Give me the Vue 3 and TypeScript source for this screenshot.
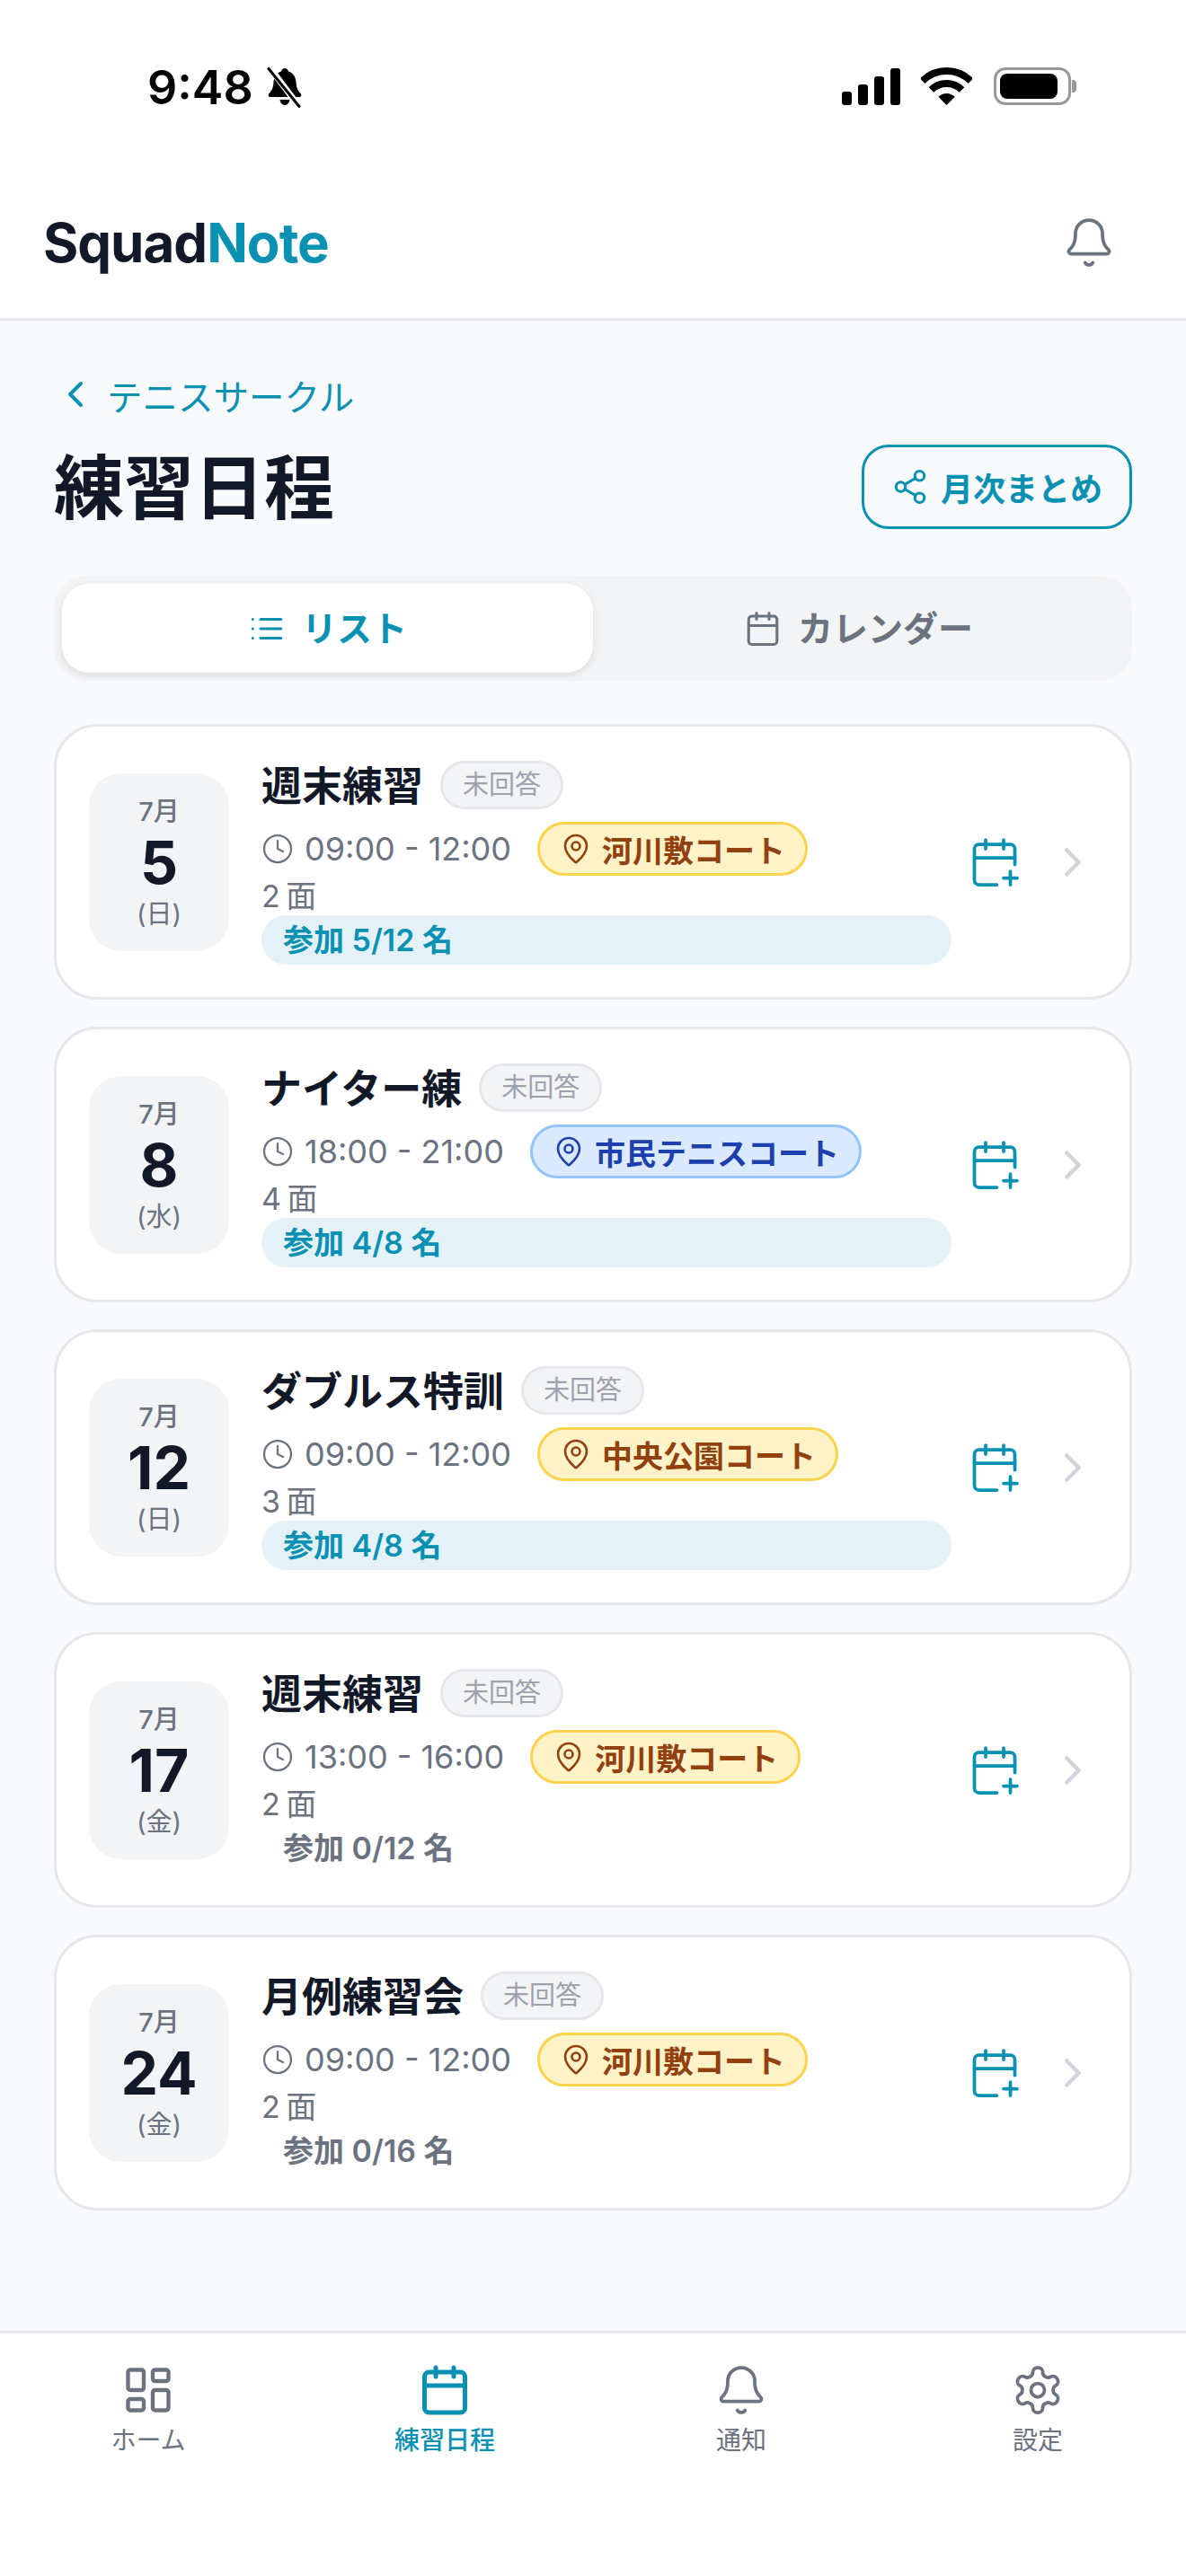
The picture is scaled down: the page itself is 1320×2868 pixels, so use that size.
<template>
  <div class="app">
    <div class="status-bar">
      <div class="status-left">
        <span class="clock-text">9:48</span>
        <svg class="bell-slash" viewBox="0 0 42 45" width="42" height="45">
          <path d="M21 1c2 0 3.500 1.400 4 3.500 5.500 1.800 8 6 8.500 12 .4 5.500 1.500 9 5 12.500 1.500 1.500.8 4-1.500 4H5c-2.300 0-3-2.500-1.500-4 3.500-3.500 4.600-7 5-12.500.5-6 3-10.200 8.500-12C17.500 2.400 19 1 21 1z" fill="#000" />
          <path d="M15.500 36h11c-.4 3.500-2.700 6-5.500 6s-5.100-2.500-5.500-6z" fill="#000" />
          <path d="M4 0l34 45" stroke="#fff" stroke-width="7" />
          <path d="M3 1.500l34 42" stroke="#000" stroke-width="3" stroke-linecap="round" />
        </svg>
      </div>
      <div class="status-right">
        <div class="signal">
          <span v-for="h in signalBars" :key="h" class="signal-bar" :style="{ height: `${h}px` }"></span>
        </div>
        <svg class="wifi" viewBox="0 0 57 42" width="57" height="42" fill="none" stroke="#000" stroke-width="8">
          <path d="M1.630 15.130A38 38 0 0 1 55.370 15.130" />
          <path d="M11.530 25.030A24 24 0 0 1 45.470 25.030" />
          <path d="M28.500 42L19.300 32.800A13 13 0 0 1 37.700 32.800Z" fill="#000" stroke="none" />
        </svg>
        <div class="battery">
          <div class="battery-body"><span class="battery-fill"></span></div>
          <span class="battery-cap"></span>
        </div>
      </div>
    </div>

    <header class="app-header">
      <div class="logo">Squad<span class="logo-accent">Note</span></div>
      <button class="icon-btn">
        <svg class="ic" viewBox="0 0 24 24" width="60" height="60" stroke-width="1.5">
          <path d="M10.268 21a2 2 0 0 0 3.464 0" />
          <path d="M3.262 15.326A1 1 0 0 0 4 17h16a1 1 0 0 0 .74-1.673C19.410 13.956 18 12.499 18 8A6 6 0 0 0 6 8c0 4.499-1.411 5.956-2.738 7.326" />
        </svg>
      </button>
    </header>

    <main class="content">
      <a class="back-link">
        <svg class="ic" viewBox="0 0 24 24" width="48" height="48" stroke-width="2"><path d="m15 18-6-6 6-6" /></svg>
        <span>テニスサークル</span>
      </a>

      <div class="page-head">
        <h1 class="page-title">練習日程</h1>
        <button class="summary-btn">
          <svg class="ic" viewBox="0 0 24 24" width="42" height="42" stroke-width="1.75">
            <circle cx="18" cy="5" r="3" />
            <circle cx="6" cy="12" r="3" />
            <circle cx="18" cy="19" r="3" />
            <line x1="8.590" x2="15.420" y1="13.510" y2="17.490" />
            <line x1="15.410" x2="8.590" y1="6.510" y2="10.490" />
          </svg>
          <span>月次まとめ</span>
        </button>
      </div>

      <div class="tabs">
        <div class="tab active">
          <svg class="ic" viewBox="0 0 24 24" width="42" height="42" stroke-width="1.75">
            <path d="M3 6h.01M3 12h.01M3 18h.01M8 6h13M8 12h13M8 18h13" />
          </svg>
          <span class="tab-label">リスト</span>
        </div>
        <div class="tab">
          <svg class="ic" viewBox="0 0 24 24" width="42" height="42" stroke-width="1.75">
            <path d="M8 2v4M16 2v4M3 10h18" />
            <rect x="3" y="4" width="18" height="18" rx="2" />
          </svg>
          <span class="tab-label">カレンダー</span>
        </div>
      </div>

      <div class="event-list">
        <article v-for="ev in events" :key="ev.day" class="event-card">
          <div class="date-box">
            <span class="date-month">7月</span>
            <span class="date-day">{{ ev.day }}</span>
            <span class="date-week">({{ ev.week }})</span>
          </div>

          <div class="event-body">
            <div class="title-row">
              <span class="event-title">{{ ev.title }}</span>
              <span class="answer-badge">未回答</span>
            </div>
            <div class="meta-row">
              <span class="time">
                <svg class="ic" viewBox="0 0 24 24" width="36" height="36" stroke-width="1.5">
                  <circle cx="12" cy="12" r="10" />
                  <path d="M12 6v6l4 2" />
                </svg>
                {{ ev.time }}
              </span>
              <span class="place" :class="ev.placeColor">
                <svg class="ic" viewBox="0 0 24 24" width="36" height="36" stroke-width="1.75">
                  <path d="M20 10c0 4.993-5.539 10.193-7.399 11.799a1 1 0 0 1-1.202 0C9.539 20.193 4 14.993 4 10a8 8 0 0 1 16 0" />
                  <circle cx="12" cy="10" r="3" />
                </svg>
                {{ ev.place }}
              </span>
            </div>
            <div class="courts">{{ ev.courts }} 面</div>
            <div class="members" :class="{ filled: ev.joined > 0 }">参加 {{ ev.joined }}/{{ ev.capacity }} 名</div>
          </div>

          <svg class="ic add-cal" viewBox="0 0 24 24" width="60" height="60" stroke-width="1.5">
            <path d="M8 2v4M16 2v4M3 10h18M16 19h6M19 16v6" />
            <path d="M21 13V6a2 2 0 0 0-2-2H5a2 2 0 0 0-2 2v14a2 2 0 0 0 2 2h8" />
          </svg>
          <svg class="ic chevron" viewBox="0 0 24 24" width="54" height="54" stroke-width="2"><path d="m9 18 6-6-6-6" /></svg>
        </article>
      </div>
    </main>

    <nav class="bottom-nav">
      <div class="nav-item">
        <svg class="ic" viewBox="0 0 24 24" width="60" height="60" stroke-width="1.75">
          <rect x="3" y="3" width="7" height="9" rx="1" />
          <rect x="14" y="3" width="7" height="5" rx="1" />
          <rect x="14" y="12" width="7" height="9" rx="1" />
          <rect x="3" y="16" width="7" height="5" rx="1" />
        </svg>
        <span>ホーム</span>
      </div>
      <div class="nav-item active">
        <svg class="ic" viewBox="0 0 24 24" width="60" height="60" stroke-width="2">
          <path d="M8 2v4M16 2v4M3 10h18" />
          <rect x="3" y="4" width="18" height="18" rx="2" />
        </svg>
        <span>練習日程</span>
      </div>
      <div class="nav-item">
        <svg class="ic" viewBox="0 0 24 24" width="60" height="60" stroke-width="1.5">
          <path d="M10.268 21a2 2 0 0 0 3.464 0" />
          <path d="M3.262 15.326A1 1 0 0 0 4 17h16a1 1 0 0 0 .74-1.673C19.410 13.956 18 12.499 18 8A6 6 0 0 0 6 8c0 4.499-1.411 5.956-2.738 7.326" />
        </svg>
        <span>通知</span>
      </div>
      <div class="nav-item">
        <svg class="ic" viewBox="0 0 24 24" width="60" height="60" stroke-width="1.5">
          <path d="M12.220 2h-.44a2 2 0 0 0-2 2v.18a2 2 0 0 1-1 1.730l-.43.25a2 2 0 0 1-2 0l-.15-.08a2 2 0 0 0-2.730.73l-.22.38a2 2 0 0 0 .73 2.730l.15.1a2 2 0 0 1 1 1.720v.51a2 2 0 0 1-1 1.740l-.15.09a2 2 0 0 0-.73 2.730l.22.38a2 2 0 0 0 2.730.73l.15-.08a2 2 0 0 1 2 0l.43.25a2 2 0 0 1 1 1.730V20a2 2 0 0 0 2 2h.44a2 2 0 0 0 2-2v-.18a2 2 0 0 1 1-1.730l.43-.25a2 2 0 0 1 2 0l.15.08a2 2 0 0 0 2.730-.73l.22-.39a2 2 0 0 0-.73-2.730l-.15-.08a2 2 0 0 1-1-1.740v-.5a2 2 0 0 1 1-1.740l.15-.09a2 2 0 0 0 .73-2.730l-.22-.38a2 2 0 0 0-2.730-.73l-.15.08a2 2 0 0 1-2 0l-.43-.25a2 2 0 0 1-1-1.730V4a2 2 0 0 0-2-2z" />
          <circle cx="12" cy="12" r="3" />
        </svg>
        <span>設定</span>
      </div>
    </nav>
  </div>
</template>

<script setup lang="ts">
interface PracticeEvent {
  day: number
  week: string
  title: string
  time: string
  place: string
  placeColor: 'yellow' | 'blue'
  courts: number
  joined: number
  capacity: number
}

const signalBars = [15, 23, 32, 41]

const events: PracticeEvent[] = [
  { day: 5, week: '日', title: '週末練習', time: '09:00 - 12:00', place: '河川敷コート', placeColor: 'yellow', courts: 2, joined: 5, capacity: 12 },
  { day: 8, week: '水', title: 'ナイター練', time: '18:00 - 21:00', place: '市民テニスコート', placeColor: 'blue', courts: 4, joined: 4, capacity: 8 },
  { day: 12, week: '日', title: 'ダブルス特訓', time: '09:00 - 12:00', place: '中央公園コート', placeColor: 'yellow', courts: 3, joined: 4, capacity: 8 },
  { day: 17, week: '金', title: '週末練習', time: '13:00 - 16:00', place: '河川敷コート', placeColor: 'yellow', courts: 2, joined: 0, capacity: 12 },
  { day: 24, week: '金', title: '月例練習会', time: '09:00 - 12:00', place: '河川敷コート', placeColor: 'yellow', courts: 2, joined: 0, capacity: 16 },
]
</script>

<style scoped>
.app {
  display: flex;
  flex-direction: column;
  width: 1320px;
  min-height: 2868px;
  background: #fff;
  color: #111827;
  font-family: Inter, "Noto Sans CJK JP", sans-serif;
}

.ic {
  flex-shrink: 0;
  fill: none;
  stroke: currentColor;
  stroke-linecap: round;
  stroke-linejoin: round;
}

/* status bar */
.status-bar {
  display: flex;
  justify-content: space-between;
  align-items: flex-start;
  height: 186px;
  padding: 75px 122px 0 164px;
  box-sizing: border-box;
}

.status-left {
  display: flex;
  align-items: center;
  gap: 14px;
  height: 45px;
}

.clock-text {
  font-size: 52px;
  font-weight: 600;
  line-height: 45px;
  color: #000;
}

.status-right {
  display: flex;
  align-items: flex-end;
  height: 42px;
}

.signal {
  display: flex;
  align-items: flex-end;
  gap: 7px;
  margin-right: 23px;
}

.signal-bar {
  width: 11px;
  border-radius: 3px;
  background: #000;
}

.wifi {
  margin-right: 24px;
}

.battery {
  display: flex;
  align-items: center;
}

.battery-body {
  box-sizing: border-box;
  width: 86px;
  height: 42px;
  padding: 4px;
  border: 3px solid #999;
  border-radius: 13px;
}

.battery-fill {
  display: block;
  width: 64px;
  height: 100%;
  border-radius: 8px;
  background: #000;
}

.battery-cap {
  width: 5px;
  height: 14px;
  margin-left: 1px;
  border-radius: 0 4px 4px 0;
  background: #999;
}

/* header */
.app-header {
  display: flex;
  justify-content: space-between;
  align-items: center;
  height: 171px;
  padding: 0 48px;
  box-sizing: border-box;
  border-bottom: 3px solid #e5e7eb;
}

.logo {
  font-size: 60px;
  font-weight: 700;
  letter-spacing: -1px;
}

.logo-accent {
  color: #0891b2;
}

.icon-btn {
  display: flex;
  padding: 30px;
  border: 0;
  background: none;
  color: #6b7280;
}

/* main */
.content {
  flex: 1;
  padding: 57px 60px 0;
  background: #f9fafb;
}

.back-link {
  display: flex;
  align-items: center;
  gap: 11px;
  height: 50px;
  font-size: 39.5px;
  color: #0891b2;
}

.page-head {
  display: flex;
  justify-content: space-between;
  align-items: center;
  margin-top: 31px;
}

.page-title {
  margin: 0;
  padding-top: 4px;
  font-size: 78px;
  font-weight: 700;
  line-height: 90px;
}

.summary-btn {
  display: flex;
  align-items: center;
  gap: 13px;
  height: 94px;
  padding: 0 30px;
  border: 3px solid #0891b2;
  border-radius: 30px;
  background: transparent;
  color: #0891b2;
  font-family: inherit;
  font-size: 36px;
  font-weight: 600;
}

.tabs {
  display: grid;
  grid-template-columns: 1fr 1fr;
  height: 117px;
  box-sizing: border-box;
  margin-top: 52px;
  padding: 9px;
  border-radius: 36px;
  background: #f3f4f6;
}

.tab {
  display: flex;
  justify-content: center;
  align-items: center;
  gap: 18px;
  border-radius: 30px;
  color: #6b7280;
  font-size: 39px;
  font-weight: 600;
}

.tab-label {
  padding-bottom: 6px;
}

.tab.active {
  background: #fff;
  color: #0891b2;
  box-shadow: 0 3px 9px rgba(0, 0, 0, 0.1);
}

/* cards */
.event-list {
  display: flex;
  flex-direction: column;
  gap: 30px;
  margin-top: 48px;
}

.event-card {
  display: flex;
  align-items: center;
  height: 307px;
  box-sizing: border-box;
  padding: 36px;
  border: 3px solid #e5e7eb;
  border-radius: 48px;
  background: #fff;
}

.date-box {
  display: flex;
  flex-direction: column;
  align-items: center;
  flex-shrink: 0;
  box-sizing: border-box;
  width: 156px;
  height: 198px;
  padding-top: 25px;
  margin-right: 36px;
  border-radius: 36px;
  background: #f3f4f6;
}

.date-month {
  font-size: 29px;
  font-weight: 500;
  line-height: 36px;
  color: #6b7280;
}

.date-day {
  font-size: 66px;
  font-weight: 700;
  line-height: 77px;
}

.date-week {
  margin-top: 1px;
  font-size: 29px;
  line-height: 36px;
  color: #6b7280;
}

.event-body {
  flex: 1;
  min-width: 0;
}

.title-row {
  display: flex;
  align-items: center;
  gap: 19px;
  height: 58px;
}

.event-title {
  padding-bottom: 4px;
  font-size: 45px;
  font-weight: 600;
}

.answer-badge {
  box-sizing: border-box;
  height: 54px;
  padding: 0 22px;
  border: 3px solid #e5e7eb;
  border-radius: 27px;
  background: #f3f4f6;
  color: #9ca3af;
  font-size: 29px;
  line-height: 48px;
}

.meta-row {
  display: flex;
  align-items: center;
  gap: 29px;
  height: 60px;
  margin-top: 12px;
}

.time {
  display: flex;
  align-items: center;
  gap: 12px;
  font-size: 36px;
  color: #6b7280;
}

.place {
  display: flex;
  align-items: center;
  gap: 11px;
  box-sizing: border-box;
  height: 60px;
  padding: 0 22px;
  border: 3px solid;
  border-radius: 30px;
  font-size: 34px;
  font-weight: 600;
}

.place.yellow {
  border-color: #fcd34d;
  background: #fef3c7;
  color: #92400e;
}

.place.blue {
  border-color: #93c5fd;
  background: #dbeafe;
  color: #1e40af;
}

.courts {
  font-size: 34px;
  line-height: 46px;
  height: 44px;
  word-spacing: -3px;
  color: #6b7280;
}

.members {
  height: 55px;
  padding: 0 24px;
  border-radius: 28px;
  color: #6b7280;
  font-size: 34px;
  font-weight: 600;
  line-height: 55px;
}

.members.filled {
  background: #e4f2f7;
  color: #0891b2;
}

.add-cal {
  margin-left: 18px;
  color: #0891b2;
}

.chevron {
  margin-left: 30px;
  color: #d1d5db;
}

/* bottom nav */
.bottom-nav {
  display: grid;
  grid-template-columns: repeat(4, 1fr);
  height: 273px;
  box-sizing: border-box;
  padding-top: 33px;
  border-top: 3px solid #e5e7eb;
  background: #fff;
}

.nav-item {
  display: flex;
  flex-direction: column;
  align-items: center;
  gap: 8px;
  color: #6b7280;
  font-size: 28px;
  line-height: 36px;
}

.nav-item.active {
  color: #0891b2;
  font-weight: 500;
}
</style>
